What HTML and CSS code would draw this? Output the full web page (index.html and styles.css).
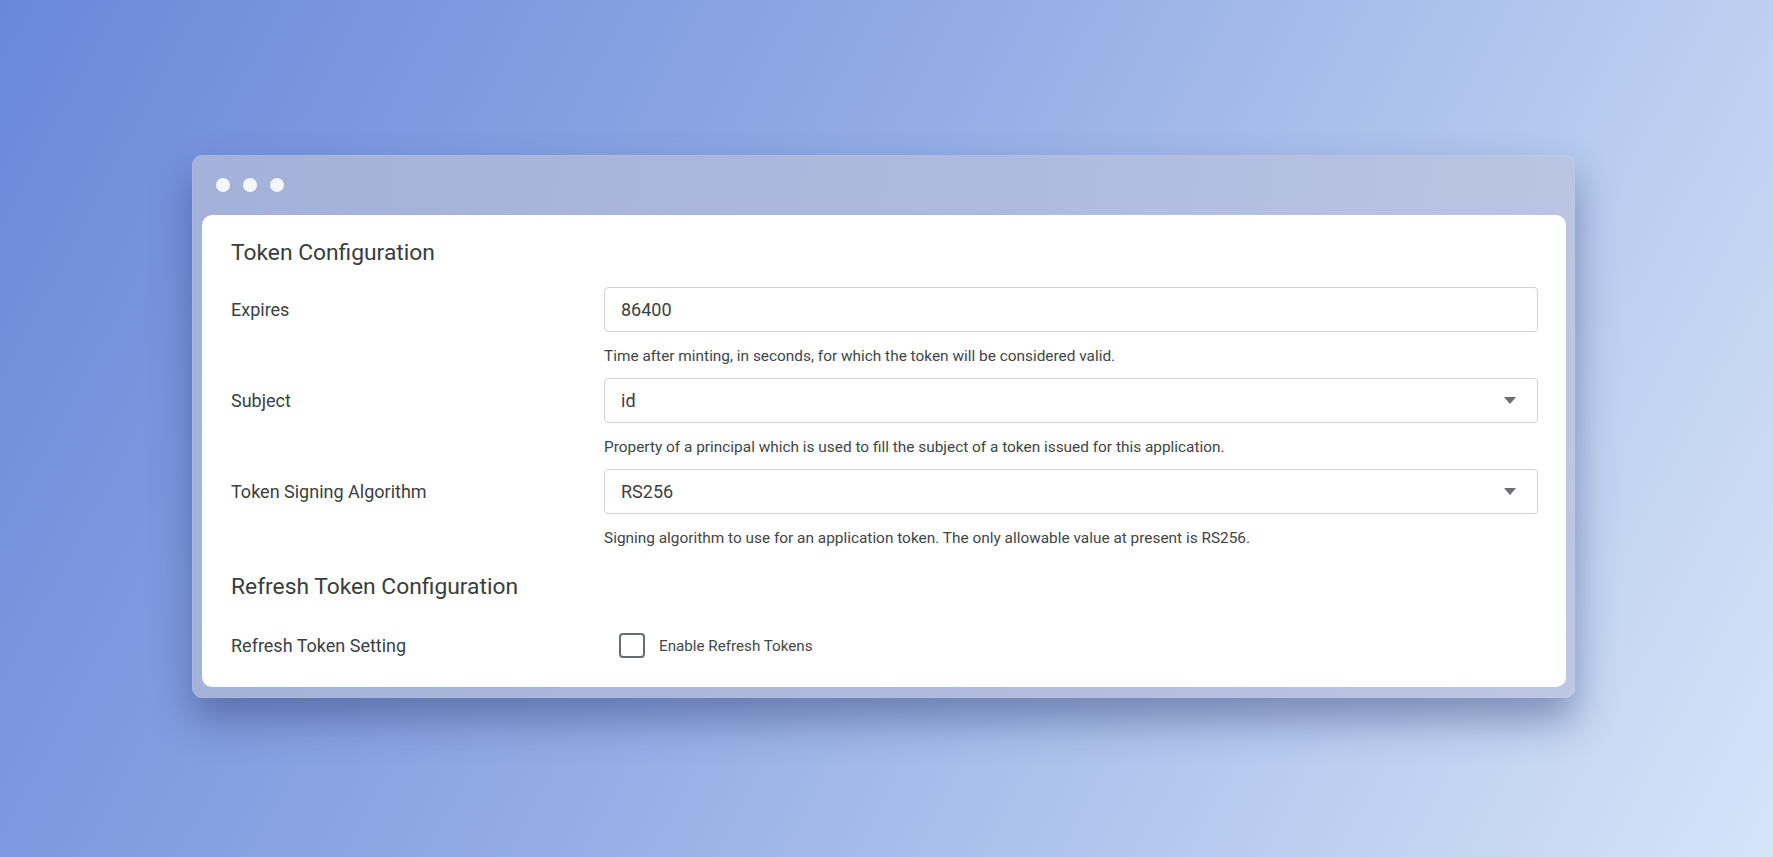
FILE: index.html
```html
<!DOCTYPE html>
<html lang="en">
<head>
<meta charset="utf-8">
<title>Token Configuration</title>
<link rel="stylesheet" href="styles.css">
</head>
<body>
<div class="stage">
  <div class="window">
    <div class="titlebar">
      <span class="dot"></span>
      <span class="dot"></span>
      <span class="dot"></span>
    </div>
    <div class="panel">
      <h2 class="section-title">Token Configuration</h2>

      <div class="form-row">
        <div class="label">Expires</div>
        <div class="field">
          <div class="input">86400</div>
          <p class="help">Time after minting, in seconds, for which the token will be considered valid.</p>
        </div>
      </div>

      <div class="form-row">
        <div class="label">Subject</div>
        <div class="field">
          <div class="input select">
            <span>id</span>
            <svg class="caret" width="12" height="7" viewBox="0 0 12 7"><path d="M0 0 L12 0 L6 7 Z"/></svg>
          </div>
          <p class="help">Property of a principal which is used to fill the subject of a token issued for this application.</p>
        </div>
      </div>

      <div class="form-row">
        <div class="label">Token Signing Algorithm</div>
        <div class="field">
          <div class="input select">
            <span>RS256</span>
            <svg class="caret" width="12" height="7" viewBox="0 0 12 7"><path d="M0 0 L12 0 L6 7 Z"/></svg>
          </div>
          <p class="help">Signing algorithm to use for an application token. The only allowable value at present is RS256.</p>
        </div>
      </div>

      <h2 class="section-title refresh">Refresh Token Configuration</h2>

      <div class="form-row check-row">
        <div class="label">Refresh Token Setting</div>
        <div class="check">
          <span class="box"></span>
          <span class="check-label">Enable Refresh Tokens</span>
        </div>
      </div>
    </div>
  </div>
</div>
</body>
</html>
```
FILE: styles.css
```css
* { box-sizing: border-box; }

html, body {
  margin: 0;
  padding: 0;
  height: 100%;
}

body {
  font-family: Roboto, "Liberation Sans", sans-serif;
  background: linear-gradient(118deg, #6a88da 0%, #94ade5 45%, #d6e4f8 100%);
  color: #3c3f42;
}

.stage {
  height: 857px;
  display: flex;
  align-items: center;
  justify-content: center;
  padding-right: 6px;
  padding-bottom: 4px;
}

.window {
  width: 1383px;
  border-radius: 11px;
  background: linear-gradient(100deg, #a4b1d8 0%, #adb9dd 50%, #bcc7e4 100%);
  padding: 0 9px 11px 10px;
  box-shadow: 0 22px 40px rgba(40, 55, 110, 0.45), 0 0 1px rgba(255, 255, 255, 0.6) inset;
}

.titlebar {
  height: 60px;
  display: flex;
  align-items: center;
  gap: 13px;
  padding-left: 14px;
}

.dot {
  width: 14px;
  height: 14px;
  border-radius: 50%;
  background: #f4f6fb;
}

.panel {
  background: #ffffff;
  border-radius: 10px;
  padding: 23px 28px 29px 29px;
}

.section-title {
  margin: 0 0 19px;
  font-size: 22.8px;
  line-height: 30px;
  font-weight: 400;
  color: #3a3d40;
}

.section-title.refresh {
  margin-top: 12px;
  margin-bottom: 31px;
}

.form-row {
  display: grid;
  grid-template-columns: 373px 1fr;
}

.label {
  height: 45px;
  display: flex;
  align-items: center;
  font-size: 18px;
  color: #3c3f42;
}

.input {
  height: 45px;
  border: 1px solid #d2d2d2;
  border-radius: 4px;
  display: flex;
  align-items: center;
  justify-content: space-between;
  padding: 0 21px 0 16px;
  font-size: 18px;
  color: #3c3f42;
}

.caret {
  fill: #6a6e73;
}

.help {
  margin: 14px 0 12px;
  font-size: 15.4px;
  line-height: 20px;
  color: #424548;
}

.check-row .label {
  height: 25px;
}

.check {
  display: flex;
  align-items: center;
  gap: 14px;
  padding-left: 15px;
  height: 25px;
}

.box {
  width: 26px;
  height: 25px;
  border: 2px solid #6a6d70;
  border-radius: 4px;
}

.check-label {
  font-size: 15.2px;
  color: #45484b;
}
```
